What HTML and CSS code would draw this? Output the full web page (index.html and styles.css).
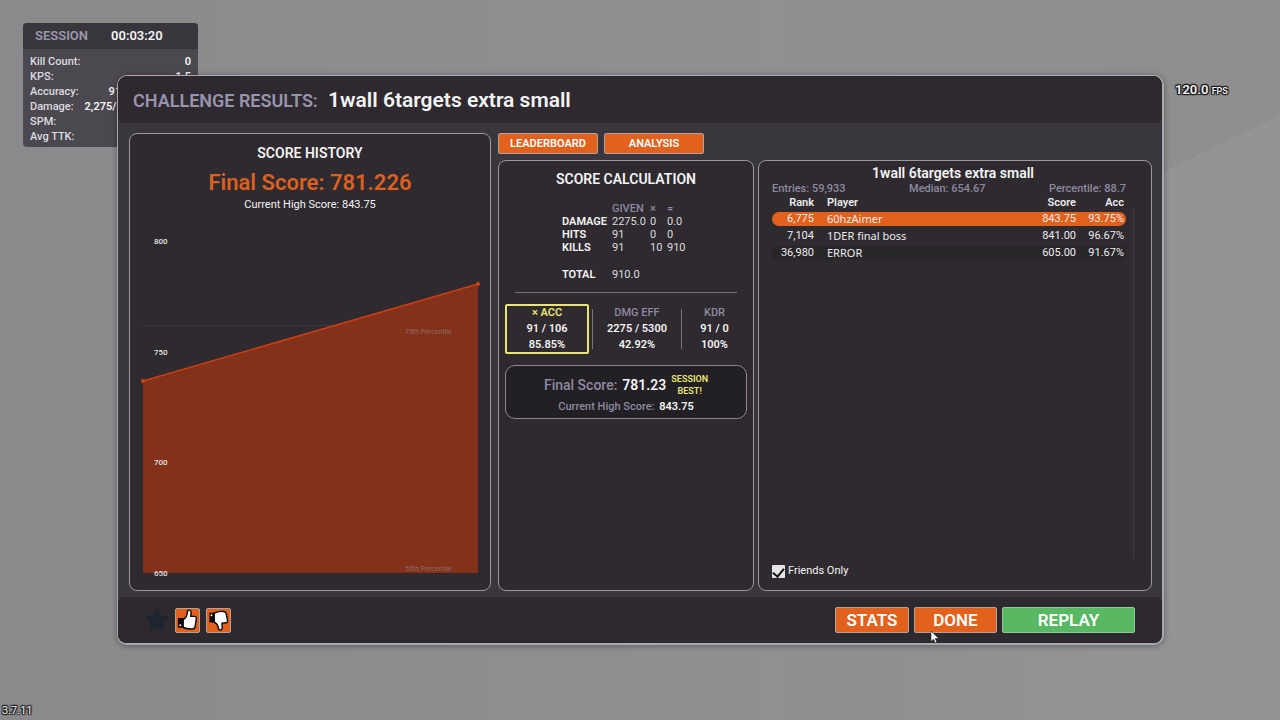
FILE: index.html
```html
<!DOCTYPE html>
<html lang="en">
<head>
	<meta charset="utf-8">
	<meta name="viewport" content="width=device-width, initial-scale=1">
	<title>Challenge Results</title>
	<link rel="stylesheet" href="styles.css">
</head>
<body>
	<svg class="wall" viewBox="0 0 1280 720" preserveAspectRatio="none" aria-hidden="true">
		<defs>
			<linearGradient id="wallFade">
				<stop offset="0" stop-color="#939496" stop-opacity="0"/>
				<stop offset="0.6" stop-color="#939496"/>
			</linearGradient>
		</defs>
		<polygon points="1280,115 880,310 880,720 1280,720" fill="url(#wallFade)"/>
	</svg>

	<!-- session stats -->
	<aside class="session">
		<header class="session-head"><span>SESSION</span><b>00:03:20</b></header>
		<dl>
			<div><dt>Kill Count:</dt><dd>0</dd></div>
			<div><dt>KPS:</dt><dd>1.5</dd></div>
			<div><dt>Accuracy:</dt><dd>91/106 (85.85%)</dd></div>
			<div><dt>Damage:</dt><dd>2,275/5,300 (42.92%)</dd></div>
			<div><dt>SPM:</dt><dd></dd></div>
			<div><dt>Avg TTK:</dt><dd></dd></div>
		</dl>
	</aside>
	<div class="fps outlined">120.0 <small>FPS</small></div>
	<div class="version outlined">3.7.11</div>

	<!-- results window -->
	<main class="dialog">
		<header class="dialog-head">
			<h1><span>CHALLENGE RESULTS:</span> 1wall 6targets extra small</h1>
		</header>

		<div class="dialog-body">
			<section class="panel history">
				<h2>SCORE HISTORY</h2>
				<p class="big-score">Final Score: 781.226</p>
				<p class="high-score">Current High Score: 843.75</p>
				<svg class="chart" viewBox="0 0 360 362" role="img" aria-label="Score history">
					<line x1="13" y1="107.5" x2="348" y2="107.5" stroke="#3a373e"/>
					<polygon points="13,163 348,66 348,355 13,355" fill="#84311b"/>
					<line x1="13" y1="163" x2="348" y2="66" stroke="#c83f14" stroke-width="1.5"/>
					<circle cx="13" cy="163" r="2" fill="#d8430f"/>
					<circle cx="348" cy="66" r="2" fill="#d8430f"/>
					<g class="axis">
						<text x="24" y="26">800</text>
						<text x="24" y="137">750</text>
						<text x="24" y="247">700</text>
						<text x="24" y="358">650</text>
					</g>
					<g class="percentile">
						<text x="275" y="116">75th Percentile</text>
						<text x="275" y="353">50th Percentile</text>
					</g>
				</svg>
			</section>

			<div class="results">
				<nav class="tabs">
					<button type="button">LEADERBOARD</button>
					<button type="button">ANALYSIS</button>
				</nav>
				<div class="result-panels">
					<section class="panel calc">
						<h2>SCORE CALCULATION</h2>
						<table class="calc-table">
							<thead>
								<tr><th></th><th>GIVEN</th><th>×</th><th>=</th></tr>
							</thead>
							<tbody>
								<tr><th>DAMAGE</th><td>2275.0</td><td>0</td><td>0.0</td></tr>
								<tr><th>HITS</th><td>91</td><td>0</td><td>0</td></tr>
								<tr><th>KILLS</th><td>91</td><td>10</td><td>910</td></tr>
							</tbody>
							<tfoot>
								<tr><th>TOTAL</th><td>910.0</td><td></td><td></td></tr>
							</tfoot>
						</table>
						<hr>
						<div class="ratios">
							<div class="ratio active"><span>× ACC</span><b>91 / 106</b><b>85.85%</b></div>
							<div class="ratio"><span>DMG EFF</span><b>2275 / 5300</b><b>42.92%</b></div>
							<div class="ratio"><span>KDR</span><b>91 / 0</b><b>100%</b></div>
						</div>
						<div class="final">
							<p class="final-score"><span>Final Score:</span> <b>781.23</b> <em>SESSION<br>BEST!</em></p>
							<p class="final-high"><span>Current High Score:</span> <b>843.75</b></p>
						</div>
					</section>

					<section class="panel board">
						<h2>1wall 6targets extra small</h2>
						<div class="summary">
							<span>Entries: 59,933</span><span>Median: 654.67</span><span>Percentile: 88.7</span>
						</div>
						<div class="scroll">
							<table class="board-table">
								<thead>
									<tr><th>Rank</th><th>Player</th><th>Score</th><th>Acc</th></tr>
								</thead>
								<tbody>
									<tr class="me"><td>6,775</td><td>60hzAimer</td><td>843.75</td><td>93.75%</td></tr>
									<tr><td>7,104</td><td>1DER final boss</td><td>841.00</td><td>96.67%</td></tr>
									<tr class="odd"><td>36,980</td><td>ERROR</td><td>605.00</td><td>91.67%</td></tr>
								</tbody>
							</table>
							<div class="track"></div>
						</div>
						<label class="friends"><input type="checkbox" checked>Friends Only</label>
					</section>
				</div>
			</div>
		</div>

		<footer class="dialog-foot">
			<svg class="star" viewBox="0 0 24 24" aria-hidden="true">
				<path d="M12 1.5l3.3 6.7 7.4 1-5.4 5.2 1.3 7.4-6.6-3.5-6.6 3.5 1.3-7.4L1.3 9.2l7.4-1z" fill="#1d2530" stroke="#1d2530" stroke-width="1.5" stroke-linejoin="round"/>
			</svg>
			<button type="button" class="vote" aria-label="Like">
				<svg viewBox="0 0 24 24">
					<path d="M2 9.500h6v10H2z" fill="#0b0b0b"/>
					<path d="M7.500 11c2.800-1.500 4-3.600 4.200-7 .1-1.900.9-2.900 2.200-2.800 1.700.2 2.100 1.700 1.900 3.300L15.200 7.500l4.300.2c1.400.1 1.900 1.200 1.700 2.400l-1.200 8c-.3 1.700-1.300 2.700-3 2.700-3.700.1-6.800-.2-9.500-1.500z" fill="#fff" stroke="#0b0b0b" stroke-width="1.500" stroke-linejoin="round"/>
					<circle cx="4.500" cy="17" r="1" fill="#fff"/>
				</svg>
			</button>
			<button type="button" class="vote" aria-label="Dislike">
				<svg viewBox="0 0 24 24">
					<path d="M2.500 4h6v10h-6z" fill="#0b0b0b"/>
					<path d="M7.500 4.200C10.500 2.600 14 2.300 17.500 2.600c1.500.1 2.200.8 2.500 2.100l1.400 7.100c.3 1.500-.3 2.500-1.600 2.600l-4.200.4.300 4.400c.1 1.700-.6 2.800-1.900 2.800-1.500 0-2.100-1.200-2.300-2.700-.4-2.900-1.600-4.500-4.200-5.700z" fill="#fff" stroke="#0b0b0b" stroke-width="1.500" stroke-linejoin="round"/>
					<circle cx="4.700" cy="6.500" r="1" fill="#fff"/>
				</svg>
			</button>
			<div class="actions">
				<button type="button" class="stats">STATS</button>
				<button type="button" class="done">DONE</button>
				<button type="button" class="replay">REPLAY</button>
			</div>
		</footer>
	</main>

	<svg class="cursor" viewBox="0 0 10 14" aria-hidden="true">
		<path d="M1 1v10.500l2.500-2.300 1.700 3.900 1.700-.8-1.700-3.700h3.600z" fill="#fff" stroke="#222" stroke-width=".6"/>
	</svg>
</body>
</html>
```
FILE: styles.css
```css
* {margin: 0; padding: 0; box-sizing: border-box;}
body {min-height: 100vh; display: flex; padding: 75px 117px; background: linear-gradient(90deg, #8a8a8c, #909090 60%, #8e8e8e); font-family: Roboto, "Liberation Sans", sans-serif; font-size: 11px; line-height: 16px; color: #f4f4f4; position: relative; overflow-x: hidden;}
button {font-family: inherit; color: #fff; background: #e2611c; border: 1px solid #b3a29c; border-radius: 2px; font-weight: 600;}
table {border-collapse: collapse;}
.wall {position: absolute; top: 0; left: 0; width: 100%; height: 100%;}
.outlined {text-shadow: 1px 1px 1px #111, -1px -1px 1px #111, 1px -1px 1px #111, -1px 1px 1px #111, 0 0 2px #111;}

/* hud */
.session {position: absolute; left: 23px; top: 23px; width: 175px; height: 124px; background: #4b484f; border-radius: 4px; overflow: hidden; font-weight: 600;}
.session-head {display: flex; gap: 23px; height: 26px; padding-left: 12px; background: #38353b; font-size: 13px; line-height: 26px;}
.session-head span {color: #9c98b0;}
.session-head b {font-weight: 600;}
.session dl {padding: 5px 7px;}
.session dl div {display: flex; justify-content: space-between; line-height: 15px; height: 15px; white-space: nowrap;}
.session dt {color: #dcdce0; font-weight: 500;}
.fps {position: absolute; left: 1175px; top: 82px; font-size: 13px; font-weight: 600;}
.fps small {font-size: 9px;}
.version {position: absolute; left: 2px; bottom: 1px;}

/* window */
.dialog {flex: 1; display: flex; flex-direction: column; position: relative; min-width: 0; margin-right: -1px; background: #39363d; border: 2px solid #a9a9ad; border-width: 1px 2px 2px 1px; border-radius: 10px; overflow: hidden; box-shadow: 0 1px 6px rgba(0,0,0,.35);}
.dialog-head {height: 47px; padding: 0 15px; background: #2d292e; border-radius: 0 0 6px 6px;}
.dialog-head h1 {font-size: 21px; line-height: 48px; font-weight: 600;}
.dialog-head h1 span {color: #9994ae; font-size: 18px; margin-right: 5px;}
.dialog-body {flex: 1; display: grid; grid-template-columns: 362fr 654fr; gap: 7px; padding: 10px 10px 6px 11px;}
.panel {min-width: 0; background: #2e2a2f; border: 1px solid #9a989e; border-radius: 8px; text-align: center;}
.panel h2 {font-size: 14px; font-weight: 600;}
.history {padding-top: 11px;}
.big-score {color: #dc6020; font-size: 22px; line-height: 28px; font-weight: 600; padding-top: 8px;}
.chart {display: block; width: 100%; margin-top: 5px;}
.axis {font-size: 8px; font-weight: 500; fill: #e4e4e4;}
.percentile {font-size: 7px; fill: #8b6c63;}
.results {display: flex; flex-direction: column; gap: 6px;}
.tabs {display: flex; gap: 6px;}
.tabs button {width: 100px; height: 21px; font-size: 11px;}
.result-panels {flex: 1; display: grid; grid-template-columns: 256fr 394fr; gap: 4px;}

/* score calculation */
.calc {padding: 10px 6px;}
.calc-table {table-layout: fixed; width: 135px; margin: 15px 0 0 57px; text-align: left; line-height: 13px;}
.calc-table td {color: #dcdcde;}
.calc-table th {font-weight: 600; color: #f4f4f4;}
.calc-table thead th {color: #8d899f; font-weight: 500;}
.calc-table th:first-child {width: 50px;}
.calc-table th:nth-child(2) {width: 38px;}
.calc-table th:nth-child(3) {width: 17px;}
.calc-table tfoot th, .calc-table tfoot td {padding-top: 14px;}
.calc hr {border: 0; height: 1px; background: #77757b; margin: 11px 10px;}
.ratios {display: grid; grid-template-columns: 87fr 89fr 66fr; align-items: center;}
.ratio {height: 40px; display: flex; flex-direction: column; justify-content: center; border-left: 1px solid #77757b; white-space: nowrap;}
.ratio span {color: #8d899f; font-weight: 500;}
.ratio b {font-weight: 600;}
.ratio.active {height: 50px; margin-right: 3px; border: 2px solid #e9e573; border-radius: 2px;}
.ratio.active span {color: #e9e573; font-weight: 600;}
.final {margin-top: 11px; padding: 7px 0 5px; height: 54px; background: #222025; border: 1px solid #8a888e; border-radius: 10px;}
.final span {color: #8d899f; font-weight: 500;}
.final b {font-weight: 600;}
.final-score {display: flex; justify-content: center; align-items: center; gap: 5px; height: 24px; font-size: 14px;}
.final-score em {font-size: 9px; line-height: 12px; font-style: normal; font-weight: 600; color: #e9e573;}
.final-high {line-height: 19px;}
.final-high b {margin-left: 2px;}

/* leaderboard */
.board {display: flex; flex-direction: column; padding: 4px 17px 11px 13px;}
.summary {display: flex; justify-content: space-between; padding-right: 8px; line-height: 15px; color: #8d899f; font-weight: 500;}
.scroll {flex: 1; display: flex; padding-bottom: 3px;}
.board-table {flex: 1; align-self: flex-start; border-collapse: separate; border-spacing: 0 3px; margin-top: -3px; text-align: right; line-height: 14px;}
.board-table th {font-weight: 600; line-height: 13px;}
.board-table td, .board-table th {padding: 0 2px 0 0; color: #ececee;}
.board-table th:nth-child(1) {width: 44px;}
.board-table th:nth-child(3) {width: 60px;}
.board-table th:nth-child(4) {width: 48px;}
.board-table th:nth-child(2), .board-table td:nth-child(2) {text-align: left; padding-left: 11px;}
.board-table td:nth-child(2) {font-family: "Noto Sans", sans-serif;}
.board-table .me td {background: #e2611c;}
.board-table .me td:first-child {border-radius: 8px 0 0 8px;}
.board-table .me td:last-child {border-radius: 0 8px 8px 0;}
.board-table .odd td {background: #29262a;}
.track {width: 1px; background: #3f3c42; margin: 12px 0 0 7px;}
.friends {display: flex; align-items: center; gap: 3px; padding-top: 2px;}
.friends input {appearance: none; display: flex; justify-content: center; width: 13px; height: 13px; background: #e4e4e6; border-radius: 1px;}
.friends input:checked::after {content: ""; width: 5px; height: 9px; margin-top: 1px; border: solid #111; border-width: 0 2px 2px 0; transform: rotate(40deg);}

/* buttons */
.dialog-foot {height: 46px; display: flex; align-items: center; gap: 6px; padding: 0 27px; background: #2d292e; border-radius: 6px 6px 0 0;}
.star {width: 24px; height: 24px;}
.vote {width: 25px; height: 25px;}
.vote svg {display: block; width: 23px; height: 23px;}
.actions {margin-left: auto; display: flex; gap: 5px; align-items: center;}
.actions button {height: 26px; font-size: 17px;}
.actions .stats {width: 74px;}
.actions .done {width: 83px;}
.actions .replay {width: 133px; background: #59b863; border-color: #8fc894;}
.cursor {position: absolute; left: 930px; top: 630px; width: 10px; height: 14px;}
```
